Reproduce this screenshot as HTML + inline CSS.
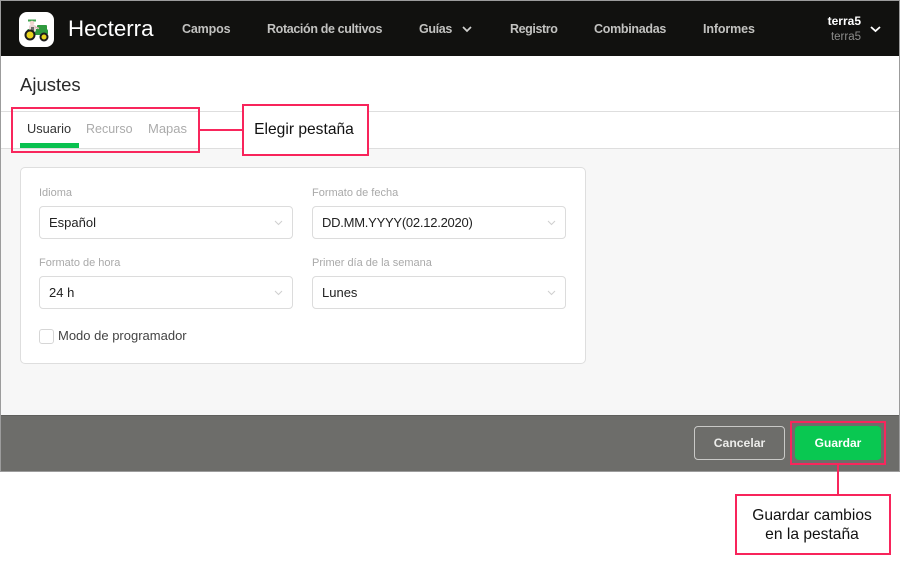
<!DOCTYPE html>
<html lang="es">
<head>
<meta charset="utf-8">
<title>Ajustes</title>
<style>
html,body{margin:0;padding:0;background:#fff}
#p{position:relative;width:900px;height:561px;overflow:hidden;background:#fff;font-family:"Liberation Sans",sans-serif;color:#1f1f1f}
#p div{position:absolute;box-sizing:border-box;white-space:nowrap}
.nav{top:21px;height:17px;line-height:17px;font-size:12.5px;color:#c2c2c0;font-weight:bold}
.lab{font-size:11px;line-height:14px;height:14px;color:#a9a9a9}
.sel{width:254px;height:33px;background:#fff;border:1px solid #dcdcdc;border-radius:4px;font-size:13px;line-height:31px;padding-left:9px;color:#222}
.r{stroke:#f8265c;stroke-width:2;fill:none}
.box{background:#fff;border:2px solid #f8245b;color:#111;text-align:center;font-size:15.6px}
svg{position:absolute;overflow:visible}
</style>
</head>
<body>
<div id="p">
  <div style="left:0;top:0;width:900px;height:472px;background:#f7f7f7;border:1px solid #9c9c9c;border-bottom:0"></div>

  <div style="left:1px;top:1px;width:898px;height:55px;background:#11110f"></div>
  <div style="left:19px;top:12px;width:35px;height:35px;background:#fff;border-radius:8px"></div>
  <svg style="left:19px;top:12px" width="35" height="35" viewBox="0 0 35 35">
    <rect x="18" y="13" width="10" height="8" rx="1" fill="#2f9a3e"/>
    <rect x="8" y="17" width="21" height="6" rx="2" fill="#2f9a3e"/>
    <path d="M9 7.500h8v2h-8z" fill="#3fa34d"/>
    <circle cx="13" cy="11" r="2.300" fill="#f0d5d0"/>
    <rect x="10" y="13" width="7" height="7" rx="2" fill="#e9d6d6"/>
    <rect x="12" y="15" width="3" height="5" fill="#6a6a6a"/>
    <path d="M16 15l4 1.500" stroke="#d9b8b8" stroke-width="1.500"/>
    <circle cx="11" cy="23" r="4.500" fill="#e8d41f" stroke="#1c1c1c" stroke-width="2"/>
    <circle cx="25" cy="25" r="3.500" fill="#e8d41f" stroke="#1c1c1c" stroke-width="2"/>
  </svg>
  <div style="left:68px;top:15px;height:28px;line-height:28px;font-size:22.300px;color:#fff">Hecterra</div>

  <div class="nav" style="left:182px;letter-spacing:-.15px">Campos</div>
  <div class="nav" style="left:267px;letter-spacing:-.36px">Rotación de cultivos</div>
  <div class="nav" style="left:419px;letter-spacing:-.35px">Guías</div>
  <svg style="left:462px;top:26px" width="10" height="7" viewBox="0 0 10 7"><path d="M1 1l4 4 4-4" fill="none" stroke="#d0d0ce" stroke-width="1.700"/></svg>
  <div class="nav" style="left:510px;letter-spacing:-.4px">Registro</div>
  <div class="nav" style="left:594px;letter-spacing:-.3px">Combinadas</div>
  <div class="nav" style="left:703px;letter-spacing:-.12px">Informes</div>
  <div style="right:39px;top:14px;height:15px;line-height:15px;font-size:12px;font-weight:bold;color:#fff">terra5</div>
  <div style="right:39px;top:30px;height:15px;line-height:15px;font-size:11.500px;color:#8d8d8b">terra5</div>
  <svg style="left:870px;top:26px" width="11" height="7" viewBox="0 0 11 7"><path d="M1 1l4.500 4 4.500-4" fill="none" stroke="#fff" stroke-width="1.800"/></svg>

  <div style="left:1px;top:56px;width:898px;height:92px;background:#fff"></div>
  <div style="left:1px;top:111px;width:898px;height:1px;background:#dedede"></div>
  <div style="left:1px;top:148px;width:898px;height:1px;background:#dedede"></div>
  <div style="left:20px;top:73px;height:23px;line-height:23px;font-size:18.500px;color:#2a2a2a">Ajustes</div>
  <div style="left:27px;top:121px;height:16px;line-height:16px;font-size:12.800px;color:#333">Usuario</div>
  <div style="left:86px;top:121px;height:16px;line-height:16px;font-size:12.500px;color:#ababab">Recurso</div>
  <div style="left:148px;top:121px;height:16px;line-height:16px;font-size:13px;color:#ababab">Mapas</div>
  <div style="left:19.500px;top:143px;width:59px;height:5px;background:#09c14f"></div>

  <div style="left:20px;top:167px;width:566px;height:197px;background:#fff;border:1px solid #dedede;border-radius:5px"></div>

  <div class="lab" style="left:39px;top:186px">Idioma</div>
  <div class="sel" style="left:39px;top:206px">Español</div>
  <div class="lab" style="left:312px;top:186px">Formato de fecha</div>
  <div class="sel" style="left:312px;top:206px;letter-spacing:-.25px">DD.MM.YYYY(02.12.2020)</div>
  <div class="lab" style="left:39px;top:256px">Formato de hora</div>
  <div class="sel" style="left:39px;top:276px">24 h</div>
  <div class="lab" style="left:312px;top:256px">Primer día de la semana</div>
  <div class="sel" style="left:312px;top:276px">Lunes</div>
  <svg style="left:274px;top:220px" width="9" height="6" viewBox="0 0 9 6"><path d="M1 1l3.500 3.500L8 1" fill="none" stroke="#cfcfcf" stroke-width="1"/></svg>
  <svg style="left:547px;top:220px" width="9" height="6" viewBox="0 0 9 6"><path d="M1 1l3.500 3.500L8 1" fill="none" stroke="#cfcfcf" stroke-width="1"/></svg>
  <svg style="left:274px;top:290px" width="9" height="6" viewBox="0 0 9 6"><path d="M1 1l3.500 3.500L8 1" fill="none" stroke="#cfcfcf" stroke-width="1"/></svg>
  <svg style="left:547px;top:290px" width="9" height="6" viewBox="0 0 9 6"><path d="M1 1l3.500 3.500L8 1" fill="none" stroke="#cfcfcf" stroke-width="1"/></svg>

  <div style="left:39px;top:329px;width:15px;height:15px;background:#fff;border:1px solid #d6d6d6;border-radius:3px"></div>
  <div style="left:58px;top:328px;height:16px;line-height:16px;font-size:13px;color:#444">Modo de programador</div>

  <div style="left:1px;top:415px;width:898px;height:56px;background:#6d6d6a"></div>
  <div style="left:1px;top:415px;width:898px;height:1px;background:#5f5f5c"></div>
  <div style="left:0;top:471px;width:900px;height:1px;background:#9c9c9c"></div>
  <div style="left:694px;top:426px;width:91px;height:34px;border:1px solid #c9c9c7;border-radius:4px;text-align:center;line-height:32px;font-size:12.200px;font-weight:bold;color:#ececea">Cancelar</div>
  <div style="left:795px;top:426px;width:86px;height:34px;background:#09c851;border-radius:4px;text-align:center;line-height:34px;font-size:12px;font-weight:bold;color:#fff">Guardar</div>

  <svg style="left:0;top:0" width="900" height="561" viewBox="0 0 900 561">
    <rect class="r" x="12" y="108" width="187" height="44"/>
    <path class="r" d="M199 130H243"/>
    <rect class="r" x="791" y="422" width="94" height="42"/>
    <path class="r" d="M838 464V495"/>
  </svg>
  <div class="box" style="left:242px;top:104px;width:127px;height:52px;line-height:48px;padding-right:3px">Elegir pestaña</div>
  <div class="box" style="left:735px;top:494px;width:156px;height:61px;padding-top:10px;padding-right:2px;line-height:19px">Guardar cambios<br>en la pestaña</div>
</div>
</body>
</html>
